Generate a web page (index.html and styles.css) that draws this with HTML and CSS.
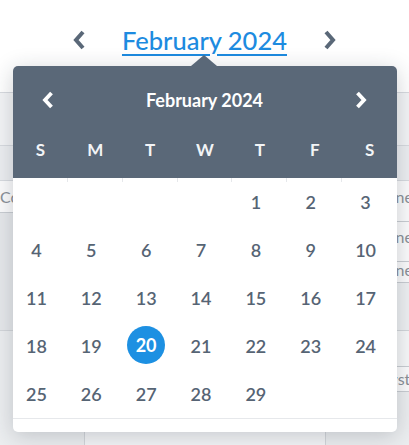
FILE: index.html
```html
<!DOCTYPE html>
<html lang="en">
<head>
<meta charset="utf-8">
<title>Date picker</title>
<link rel="stylesheet" href="styles.css">
</head>
<body>
<div class="page">
  <div class="topnav">
    <svg class="nav-chev" width="14" height="22" viewBox="0 0 14 22"><path d="M11 3 L4 11 L11 19" /></svg>
    <a class="month-link" href="#">February 2024</a>
    <svg class="nav-chev" width="14" height="22" viewBox="0 0 14 22"><path d="M3 3 L10 11 L3 19" /></svg>
  </div>
  <div class="thead"></div>
  <div class="subhead"></div>
  <div class="tbody">
    <div class="col col-left">
      <div class="cell-input">Co</div>
      <div class="fill-gray"></div>
      <div class="fill-light"></div>
    </div>
    <div class="col col-mid">
      <div class="fill-white"></div>
    </div>
    <div class="col col-right">
      <div class="cell-input tall">Phone</div>
      <div class="cell-input mid">Phone</div>
      <div class="cell-input short">Phone</div>
      <div class="fill-gray2"></div>
      <div class="fill-light2"></div>
      <div class="cell-input first">First</div>
      <div class="fill-light"></div>
    </div>
  </div>

  <div class="popover">
    <span class="caret"></span>
    <div class="pop-head">
      <div class="pop-nav">
        <svg class="pop-chev" width="14" height="20" viewBox="0 0 14 20"><path d="M10.5 3 L4 10 L10.5 17" /></svg>
        <span class="pop-title">February 2024</span>
        <svg class="pop-chev" width="14" height="20" viewBox="0 0 14 20"><path d="M3.5 3 L10 10 L3.5 17" /></svg>
      </div>
      <div class="weekdays">
        <span>S</span><span>M</span><span>T</span><span>W</span><span>T</span><span>F</span><span>S</span>
      </div>
    </div>
    <div class="ticks"><span></span><span></span><span></span><span></span><span></span><span></span><span></span></div>
    <div class="days">
      <span></span><span></span><span></span><span></span><span>1</span><span>2</span><span>3</span>
      <span>4</span><span>5</span><span>6</span><span>7</span><span>8</span><span>9</span><span>10</span>
      <span>11</span><span>12</span><span>13</span><span>14</span><span>15</span><span>16</span><span>17</span>
      <span>18</span><span>19</span><span><b class="today">20</b></span><span>21</span><span>22</span><span>23</span><span>24</span>
      <span>25</span><span>26</span><span>27</span><span>28</span><span>29</span><span></span><span></span>
    </div>
    <div class="pop-foot"></div>
  </div>
</div>
</body>
</html>
```
FILE: styles.css
```css
* { box-sizing: border-box; }
html, body { margin: 0; padding: 0; }
body {
  width: 409px;
  height: 445px;
  overflow: hidden;
  background: #ffffff;
  font-family: Lato, "Noto Sans", sans-serif;
}
.page {
  position: relative;
  width: 409px;
  height: 445px;
}
.topnav {
  height: 93px;
  padding-bottom: 13px;
  display: flex;
  align-items: center;
  justify-content: center;
  gap: 36px;
  border-bottom: 1px solid #d7dadf;
}
.nav-chev path {
  fill: none;
  stroke: #5a6878;
  stroke-width: 4;
}
.month-link {
  font-size: 25.5px;
  font-weight: 500;
  color: #1d8be0;
  text-decoration: underline;
  text-decoration-thickness: 2px;
  text-underline-offset: 4px;
  line-height: 30px;
}
.thead {
  height: 53px;
  background: #f3f4f6;
  border-bottom: 1px solid #d7dadf;
}
.subhead {
  height: 35px;
  background: #eceef1;
  border-bottom: 1px solid #d7dadf;
}
.tbody {
  display: grid;
  grid-template-columns: 84px 242px 83px;
  height: 264px;
}
.col { display: flex; flex-direction: column; }
.col-mid { border-left: 1px solid #d3d6da; border-right: 1px solid #d3d6da; }
.cell-input {
  height: 32px;
  font-size: 16px;
  color: #8a9098;
  line-height: 32px;
  border-bottom: 1px solid #c9cdd2;
  background: #fbfbfc;
  white-space: nowrap;
  overflow: hidden;
}
.col-left .cell-input { padding-left: 0; }
.col-right .cell-input { padding-left: 42px; }
.cell-input.tall { height: 41px; line-height: 32px; }
.cell-input.mid { height: 40px; line-height: 30px; }
.cell-input.short { height: 21px; line-height: 16px; }
.cell-input.first { height: 26px; line-height: 24px; border-top: 1px solid #c9cdd2; padding-left: 53px; }
.fill-gray { height: 118px; background: #e6e8eb; border-bottom: 1px solid #d3d6da; }
.fill-gray2 { height: 48px; background: #eef0f2; border-bottom: 1px solid #d3d6da; }
.fill-light2 { height: 35px; background: #f7f8f9; }
.fill-light { flex: 1; background: #eceef0; }
.fill-white { flex: 1; background: #f4f5f7; }

.popover {
  position: absolute;
  left: 13px;
  top: 66px;
  width: 384px;
  height: 366px;
  background: #ffffff;
  border-radius: 5px;
  box-shadow: 0 4px 22px rgba(30, 40, 55, 0.22);
}
.caret {
  position: absolute;
  left: 178px;
  top: -11px;
  width: 0;
  height: 0;
  border-left: 13px solid transparent;
  border-right: 13px solid transparent;
  border-bottom: 11px solid #5a6878;
}
.pop-head {
  background: #5a6878;
  border-radius: 5px 5px 0 0;
  height: 112px;
}
.pop-nav {
  height: 68px;
  display: flex;
  align-items: center;
  justify-content: space-between;
  padding: 0 29px 0 28px;
}
.pop-chev path {
  fill: none;
  stroke: #ffffff;
  stroke-width: 3.8;
}
.pop-title {
  color: #ffffff;
  font-size: 18px;
  font-weight: 700;
}
.weekdays {
  display: grid;
  grid-template-columns: repeat(7, 1fr);
  height: 44px;
  line-height: 32px;
  text-align: center;
  color: #f2f4f6;
  font-size: 17px;
  font-weight: 700;
}
.ticks {
  display: grid;
  grid-template-columns: repeat(7, 1fr);
  height: 4px;
}
.ticks span { border-right: 1px solid #e6e8eb; }
.ticks span:last-child { border-right: none; }
.days {
  display: grid;
  grid-template-columns: repeat(7, 1fr);
  grid-auto-rows: 48px;
  margin: -4px 4px 0 -4px;
  font-size: 18px;
  font-weight: 600;
  color: #566474;
  text-align: center;
}
.days span {
  display: flex;
  align-items: center;
  justify-content: center;
}
.today {
  display: flex;
  align-items: center;
  justify-content: center;
  width: 38px;
  height: 38px;
  margin-top: -3px;
  border-radius: 50%;
  background: #1d90e2;
  color: #ffffff;
  font-weight: 700;
}
.pop-foot {
  height: 14px;
  border-top: 1px solid #e6e8eb;
}
```
